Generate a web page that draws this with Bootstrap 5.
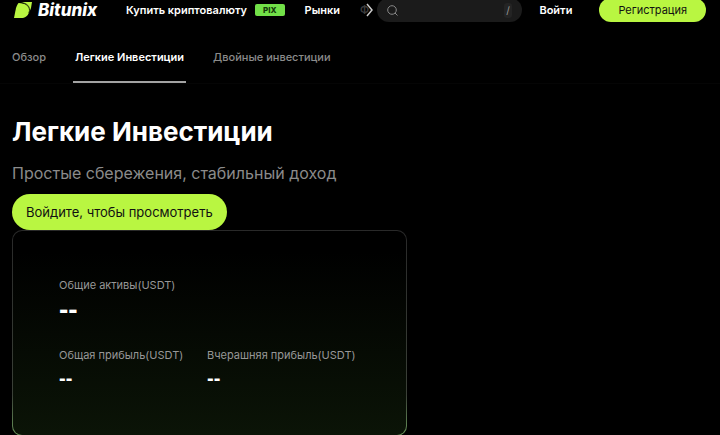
<!DOCTYPE html>
<html lang="ru" data-bs-theme="dark">
<head>
<meta charset="utf-8">
<meta name="viewport" content="width=device-width, initial-scale=1">
<title>Bitunix – Легкие Инвестиции</title>
<link href="https://cdn.jsdelivr.net/npm/bootstrap@5.3.0/dist/css/bootstrap.min.css" rel="stylesheet">
<style>
:root { --lime: #b9f641; --muted: #8b8b8b; }
body { background: #000; color: #fff; font-family: Inter, "Liberation Sans", sans-serif; font-size: 11px; line-height: 16px; }
a { color: inherit; text-decoration: none; }
.topbar { margin-top: -2px; height: 24px; padding: 0 14px 0 12px; }
.brand-link { width: 88px; margin-right: 26px; }
.brand-link svg { display: block; }
.main-links { gap: 20px; font-weight: 600; white-space: nowrap; }
.buy-link { gap: 8px; }
.pix { background: #72e048; color: #14380a; font-size: 8px; line-height: 12px; padding: 0 8px; border-radius: 2px; font-weight: 800; }
.more-btn { width: 17px; height: 24px; background: none; border: 0; padding: 0; margin-left: 20px; }
.more-btn svg { display: block; }
.search { background: #1b1b1b; border-radius: 12px; height: 24px; flex: 1 1 0; min-width: 0; padding: 0 10px; }
.search input { background: none; border: 0; outline: 0; min-width: 0; height: 20px; color: #fff; }
.search kbd { background: #242424; color: #999; width: 15px; height: 15px; line-height: 15px; font-size: 10px; font-family: inherit; border-radius: 3px; padding: 0; text-align: center; }
.login { font-weight: 600; margin: 0 27px 0 17px; }
.lime-btn, .lime-btn:hover { background: var(--lime); color: #111; border: 0; line-height: 16px; border-radius: 50px; white-space: nowrap; }
.signup { height: 24px; padding: 0 19px; font-size: 11px; }
.tabs { padding: 0 10px; margin-top: 18px; gap: 25px; border-bottom: 1px solid #050505; color: var(--muted); font-weight: 500; }
.tabs a { padding: 9px 2px 16px; border-bottom: 2px solid transparent; }
.tabs a.current { color: #fff; font-weight: 600; border-color: #a3a3a3; }
main { padding: 32px 12px 0; }
h1 { font-size: 26px; line-height: 32px; font-weight: 700; margin: 0 0 15px; }
.intro { font-size: 16px; line-height: 20px; color: var(--muted); margin: 0 0 11px; }
.view-btn { height: 36px; padding: 0 14px; font-size: 13px; }
.assets { width: fit-content; padding: 46px 46px 42px; border-radius: 10px; border: 1px solid transparent;
  background: linear-gradient(#000 10%, #0b1407) padding-box, linear-gradient(#292929, #3b4138 80%, #69955a) border-box; }
.assets dl, .assets dd { margin: 0; }
.assets dt { font-weight: 400; color: #979797; }
.assets dd { font-weight: 700; font-family: "Liberation Sans", sans-serif; }
.total dd { font-size: 28px; line-height: 34px; }
.profit { gap: 20px; margin-top: 20px; }
.profit dl { min-width: 128px; }
.profit dl + dl { min-width: 153px; }
.profit dd { font-size: 20px; line-height: 30px; }
</style>
</head>
<body>
<header class="topbar d-flex align-items-center">
  <a class="brand-link flex-shrink-0" href="#" aria-label="Bitunix">
    <svg width="88" height="20" viewBox="0 0 88 20" aria-hidden="true">
      <path fill="#b9f641" d="M7 3c7 0 11 4 10 9-1 4-4 6-8 6H2L4 8c1-3 2-5 3-5Z"/>
      <path fill="#b9f641" d="M9 2h11l-1 6-2 5c1-6-2-9-8-11Z"/>
      <path fill="none" stroke="#000" stroke-width=".8" d="M7 2.500c8 0 12 4 10 10.500"/>
      <text x="26" y="16" fill="#fff" font-family="Inter, sans-serif" font-size="17" font-weight="800" font-style="italic">Bitunix</text>
    </svg>
  </a>
  <nav class="main-links d-flex align-items-center" aria-label="Основное меню">
    <a class="buy-link d-flex align-items-center" href="#">Купить криптовалюту <span class="pix">PIX</span></a>
    <a href="#">Рынки</a>
  </nav>
  <button class="more-btn flex-shrink-0" type="button" aria-label="Ещё">
    <svg width="17" height="24" aria-hidden="true"><text x="0" y="16" fill="#3c3c3c" font-family="Inter, sans-serif" font-size="11" font-weight="600">Ф</text><path d="m7 6 5 6-5 6" fill="none" stroke="#ccc" stroke-width="1.5"/></svg>
  </button>
  <label class="search d-flex align-items-center">
    <svg class="flex-shrink-0" width="12" height="12" viewBox="0 0 12 12" fill="none" stroke="#888" stroke-width="1" aria-hidden="true"><circle cx="5" cy="6" r="4.300"/><path d="m8 9 2.500 2.500"/></svg>
    <input class="flex-grow-1" type="search" aria-label="Поиск">
    <kbd>/</kbd>
  </label>
  <a class="login" href="#">Войти</a>
  <button class="btn lime-btn signup" type="button">Регистрация</button>
</header>
<nav class="tabs d-flex" aria-label="Разделы">
  <a href="#">Обзор</a>
  <a class="current" href="#" aria-current="page">Легкие Инвестиции</a>
  <a href="#">Двойные инвестиции</a>
</nav>
<main>
  <h1>Легкие Инвестиции</h1>
  <p class="intro">Простые сбережения, стабильный доход</p>
  <button class="btn lime-btn view-btn d-block" type="button">Войдите, чтобы просмотреть</button>
  <section class="assets" aria-label="Активы">
    <dl class="total"><dt>Общие активы(USDT)</dt><dd>--</dd></dl>
    <div class="profit d-flex">
      <dl><dt>Общая прибыль(USDT)</dt><dd>--</dd></dl>
      <dl><dt>Вчерашняя прибыль(USDT)</dt><dd>--</dd></dl>
    </div>
  </section>
</main>
<script src="https://cdn.jsdelivr.net/npm/bootstrap@5.3.0/dist/js/bootstrap.bundle.min.js"></script>
</body>
</html>
